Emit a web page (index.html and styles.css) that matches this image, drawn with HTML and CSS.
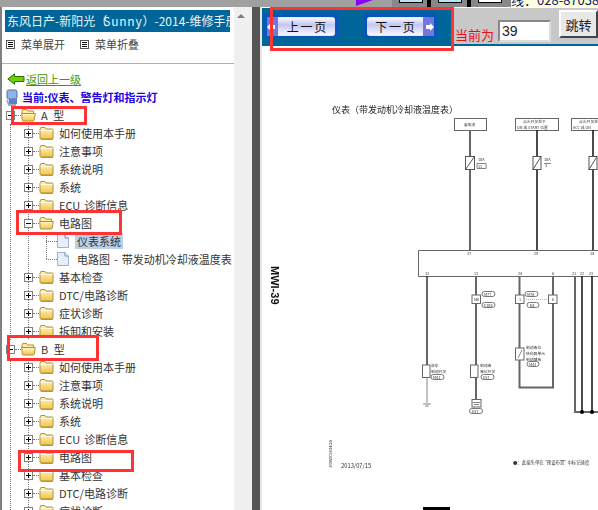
FILE: index.html
```html
<!DOCTYPE html>
<html lang="zh">
<head>
<meta charset="utf-8">
<title>维修手册</title>
<link rel="stylesheet" href="styles.css">
</head>
<body>
<svg class="defs" width="0" height="0">
  <defs>
    <linearGradient id="fg" x1="0" y1="0" x2="0" y2="1"><stop offset="0" stop-color="#fff6c4"/><stop offset="1" stop-color="#f2c44e"/></linearGradient>
    <symbol id="folder" viewBox="0 0 15 14">
      <path d="M1 3.5 L1.8 1.5 H6 L7 3 H13.2 Q14 3 14 4 V12 Q14 13 13 13 H2 Q1 13 1 12 Z" fill="url(#fg)" stroke="#b5902f"/>
      <path d="M1.5 4.5 H13.5" stroke="#fffbe0"/>
      <path d="M2 13.4 H14" stroke="#8a6a20" stroke-opacity=".6"/>
    </symbol>
    <symbol id="folder-open" viewBox="0 0 15 14">
      <path d="M1 3 L1.8 1.5 H5.5 L6.5 3 H12.5 V6 H1 Z" fill="#ffedaa" stroke="#b5902f"/>
      <path d="M.8 5.5 H14.3 L13.2 12.2 Q13 13 12 13 H2.2 Q1.2 13 1.2 12 Z" fill="url(#fg)" stroke="#b5902f"/>
    </symbol>
    <symbol id="doc" viewBox="0 0 12 14">
      <path d="M.5 .5 H8 L11.500 4 V13.500 H.5 Z" fill="#e6eefb" stroke="#9fb2d6"/>
      <path d="M8 .5 V4 H11.500" fill="#fff" stroke="#6f86b8"/>
    </symbol>
    <symbol id="menu-ico" viewBox="0 0 9 9">
      <rect x=".5" y=".5" width="8" height="8" fill="#fff" stroke="#555"/>
      <path d="M2 2.500 H7 M2 4.500 H7 M2 6.500 H7" stroke="#111"/>
    </symbol>
  </defs>
</svg>

<div class="topstrip">
  <div class="strip-gray"><span class="triangle"></span></div>
  <div class="strip-win"><span class="win-box cyan"></span></div>
  <div class="strip-black"></div>
  <div class="strip-win"><span class="win-box cyan"></span></div>
  <div class="strip-black"></div>
  <div class="strip-win"><span class="win-box white"></span></div>
  <div class="strip-hotline"><span class="hotline-text">线：028-87038</span></div>
</div>

<div class="workspace">
  <aside class="sidebar">
    <div class="side-content">
      <h1 class="manual-title">东风日产-新阳光<span class="paren">（</span><span class="sunny">Sunny</span>）-2014-维修手册</h1>
      <div class="menu-row">
        <a class="menu-item"><svg class="menu-svg"><use href="#menu-ico"/></svg>菜单展开</a>
        <a class="menu-item"><svg class="menu-svg"><use href="#menu-ico"/></svg>菜单折叠</a>
      </div>
      <hr class="divider">
      <div class="back-row">
        <svg class="back-arrow" viewBox="0 0 18 12"><path d="M.8 6 L7.500 .8 V3.500 H17 V8.500 H7.500 V11.200 Z" fill="#6fd000" stroke="#2f6f00"/></svg>
        <a class="back-link">返回上一级</a>
      </div>
      <div class="current-row">
        <svg class="pc-ico" viewBox="0 0 12 17">
          <rect x="1" y="1" width="10" height="9" rx="1.500" fill="#8fb4e8" stroke="#50709f"/>
          <rect x="3" y="10" width="8" height="5" fill="#5f80c8"/>
          <path d="M1 11 L3 16 H10" fill="none" stroke="#9aa8c0" stroke-width="2"/>
        </svg>
        <span class="current-text">当前:仪表、警告灯和指示灯</span>
      </div>

      <div class="row root-row"><span class="exp minus"></span><span class="dash"></span><svg class="fold"><use href="#folder-open"/></svg><span class="lbl root-lbl">A 型</span></div>
      <div class="kids">
        <div class="row"><span class="exp plus"></span><span class="dash"></span><svg class="fold"><use href="#folder"/></svg><span class="lbl">如何使用本手册</span></div>
        <div class="row"><span class="exp plus"></span><span class="dash"></span><svg class="fold"><use href="#folder"/></svg><span class="lbl">注意事项</span></div>
        <div class="row"><span class="exp plus"></span><span class="dash"></span><svg class="fold"><use href="#folder"/></svg><span class="lbl">系统说明</span></div>
        <div class="row"><span class="exp plus"></span><span class="dash"></span><svg class="fold"><use href="#folder"/></svg><span class="lbl">系统</span></div>
        <div class="row"><span class="exp plus"></span><span class="dash"></span><svg class="fold"><use href="#folder"/></svg><span class="lbl">ECU 诊断信息</span></div>
        <div class="row"><span class="exp minus"></span><span class="dash"></span><svg class="fold"><use href="#folder-open"/></svg><span class="lbl">电路图</span></div>
        <div class="leaves">
          <div class="row leaf"><span class="leaf-dash"></span><svg class="doc"><use href="#doc"/></svg><span class="lbl leaf-lbl selected">仪表系统</span></div>
          <div class="row leaf"><span class="leaf-dash"></span><svg class="doc"><use href="#doc"/></svg><span class="lbl leaf-lbl">电路图 - 带发动机冷却液温度表</span></div>
        </div>
        <div class="row"><span class="exp plus"></span><span class="dash"></span><svg class="fold"><use href="#folder"/></svg><span class="lbl">基本检查</span></div>
        <div class="row"><span class="exp plus"></span><span class="dash"></span><svg class="fold"><use href="#folder"/></svg><span class="lbl">DTC/电路诊断</span></div>
        <div class="row"><span class="exp plus"></span><span class="dash"></span><svg class="fold"><use href="#folder"/></svg><span class="lbl">症状诊断</span></div>
        <div class="row"><span class="exp plus"></span><span class="dash"></span><svg class="fold"><use href="#folder"/></svg><span class="lbl">拆卸和安装</span></div>
      </div>
      <div class="row root-row"><span class="exp minus"></span><span class="dash"></span><svg class="fold"><use href="#folder-open"/></svg><span class="lbl root-lbl">B 型</span></div>
      <div class="kids">
        <div class="row"><span class="exp plus"></span><span class="dash"></span><svg class="fold"><use href="#folder"/></svg><span class="lbl">如何使用本手册</span></div>
        <div class="row"><span class="exp plus"></span><span class="dash"></span><svg class="fold"><use href="#folder"/></svg><span class="lbl">注意事项</span></div>
        <div class="row"><span class="exp plus"></span><span class="dash"></span><svg class="fold"><use href="#folder"/></svg><span class="lbl">系统说明</span></div>
        <div class="row"><span class="exp plus"></span><span class="dash"></span><svg class="fold"><use href="#folder"/></svg><span class="lbl">系统</span></div>
        <div class="row"><span class="exp plus"></span><span class="dash"></span><svg class="fold"><use href="#folder"/></svg><span class="lbl">ECU 诊断信息</span></div>
        <div class="row"><span class="exp plus"></span><span class="dash"></span><svg class="fold"><use href="#folder"/></svg><span class="lbl">电路图</span></div>
        <div class="row"><span class="exp plus"></span><span class="dash"></span><svg class="fold"><use href="#folder"/></svg><span class="lbl">基本检查</span></div>
        <div class="row"><span class="exp plus"></span><span class="dash"></span><svg class="fold"><use href="#folder"/></svg><span class="lbl">DTC/电路诊断</span></div>
        <div class="row"><span class="exp plus"></span><span class="dash"></span><svg class="fold"><use href="#folder"/></svg><span class="lbl">症状诊断</span></div>
      </div>
    </div>
    <div class="scrollbar"><span class="scroll-up"></span></div>
  </aside>
  <div class="splitter"></div>

  <main class="main">
    <div class="toolbar">
      <div class="nav">
        <a class="page-btn prev"><span class="btn-cap cap-left"><svg class="cap-arrow" viewBox="0 0 8 8"><path d="M0 4 L4 0 V2 H8 V6 H4 V8 Z" fill="#fff"/></svg></span><span class="btn-txt">上 一 页</span></a>
        <a class="page-btn next"><span class="btn-txt">下 一 页</span><span class="btn-cap cap-right"><svg class="cap-arrow" viewBox="0 0 8 8"><path d="M8 4 L4 0 V2 H0 V6 H4 V8 Z" fill="#fff"/></svg></span></a>
      </div>
      <span class="cur-label">当前为</span>
      <input class="page-input" value="39">
      <button class="jump-btn">跳转</button>
    </div>
    <svg class="schematic" viewBox="262 46 336 464" width="336" height="464">
      <text class="s-title" x="332" y="112.500">仪表（带发动机冷却液温度表）</text>
      <text class="s-page" transform="translate(271 266) rotate(90)">MWI-39</text>
      <text class="s-tiny" transform="translate(332 468) rotate(-90)">JRNWC6634GB</text>
      <text class="s-date" x="341" y="468">2013/07/15</text>

      <g class="box-g">
        <rect x="454.500" y="118.500" width="32" height="12"/>
        <rect x="515.500" y="118.500" width="43" height="12"/>
        <rect x="571.500" y="118.500" width="40" height="12"/>
      </g>
      <text class="s-mini" x="464" y="126">蓄电池</text>
      <text class="s-mini" x="523" y="123">点火开关处于</text>
      <text class="s-mini" x="517" y="129">ON 或 START 位置</text>
      <text class="s-mini" x="579" y="123">点火开关处于</text>
      <text class="s-mini" x="573" y="129">ACC 或 ON</text>

      <path class="w-gray" d="M470 130 V250"/>
      <path class="w-black" d="M537 130 V250 M593 130 V250"/>
      <g class="fuse">
        <rect x="465.500" y="156.500" width="9" height="13"/><path d="M465.500 169.500 L474.500 156.500"/>
        <rect x="533" y="156.500" width="8" height="13"/><path d="M533 169.500 L541 156.500"/>
        <rect x="589" y="156.500" width="8" height="13"/><path d="M589 169.500 L597 156.500"/>
      </g>
      <text class="s-mini" x="478" y="161">10A</text>
      <text class="s-mini" x="478" y="168">11</text>
      <text class="s-mini" x="544" y="161">10A</text>
      <text class="s-mini" x="545" y="167">3</text>
      <path class="thin" d="M477 163.500 H486 V168.500 H477 Z M544 163.500 H551"/>

      <path class="frame" d="M598 250.500 H418.500 V276.500 H598"/>
      <text class="s-mini" x="467" y="255">37</text>
      <text class="s-mini" x="534" y="255">28</text>
      <text class="s-mini" x="590" y="255">14</text>
      <text class="s-mini" x="425" y="275">13</text>
      <text class="s-mini" x="474" y="275">11</text>
      <text class="s-mini" x="518" y="275">24</text>
      <text class="s-mini" x="552" y="275">6</text>
      <text class="s-mini" x="572" y="275">21</text>
      <text class="s-mini" x="580" y="275">22</text>
      <text class="s-mini" x="589" y="275">23</text>

      <path class="w-dark" d="M427 276 V370"/>
      <path class="w-thin" d="M427 370 V403"/>
      <path class="w-gray" d="M476 276 V399"/>
      <path class="w-gray" d="M519.500 276 V348 M519.500 360 V387.500 H553 V276"/>
      <path class="w-gray" d="M575 276 V412 H598"/>
      <path class="w-black" d="M582 276 V412 M592 276 V412"/>
      <circle cx="582" cy="412" r="2"/>
      <circle cx="592" cy="412" r="2"/>

      <g class="conn">
        <rect x="472" y="295" width="8.500" height="8.500"/>
        <rect x="515.500" y="295" width="8.500" height="8.500"/>
        <rect x="548.500" y="295" width="8.500" height="8.500"/>
        <rect x="515.500" y="348" width="8.500" height="12"/>
        <rect x="422.500" y="365" width="7.500" height="12.500"/>
        <rect x="470.500" y="365" width="7.500" height="12.500"/>
        <rect x="472" y="399.500" width="9" height="7.500"/>
      </g>
      <text class="s-mini" x="474" y="301">M6</text>
      <text class="s-mini" x="519" y="301">1</text>
      <text class="s-mini" x="552" y="301">6</text>
      <path class="dots" d="M524 299.500 H548"/>
      <path class="thin" d="M518 358 L522 350"/>
      <path class="thin" d="M473 402.500 H480 M474 404.500 H479 M423 404 H431 M425 406 H429"/>

      <g class="pill">
        <rect x="482" y="291.500" width="13" height="5" rx="2.500"/>
        <rect x="482" y="302.500" width="13" height="5" rx="2.500"/>
        <rect x="525" y="291.500" width="13" height="5" rx="2.500"/>
        <rect x="527" y="302.500" width="12" height="5" rx="2.500"/>
        <rect x="527" y="361.500" width="12" height="5" rx="2.500"/>
        <rect x="431" y="374.500" width="13" height="5" rx="2.500"/>
        <rect x="481" y="374.500" width="13" height="5" rx="2.500"/>
        <rect x="469.500" y="408.500" width="13" height="5" rx="2.500"/>
      </g>
      <text class="s-mini" x="484" y="296">M77</text>
      <text class="s-mini" x="484" y="307">E106</text>
      <text class="s-mini" x="527" y="296">M76</text>
      <text class="s-mini" x="530" y="307">B4</text>
      <text class="s-mini" x="529" y="366">M43</text>
      <text class="s-mini" x="433" y="379">M41</text>
      <text class="s-mini" x="483" y="379">E57</text>
      <text class="s-mini" x="472" y="413">E57</text>

      <text class="s-mini" x="526" y="349">制动液位</text>
      <text class="s-mini" x="526" y="355">转向器单元</text>
      <text class="s-mini" x="526" y="361">制动踏板</text>
      <text class="s-mini" x="431" y="367">驻车</text>
      <text class="s-mini" x="431" y="373">制动开关</text>
      <text class="s-mini" x="480" y="367">制动液</text>
      <text class="s-mini" x="480" y="373">液位开关</text>
      <text class="s-note" x="513" y="464">●：此接头单在 "预设布置" 中标记速度</text>
      <rect x="423" y="507" width="27" height="3"/>
    </svg>
  </main>
</div>

<div class="marks">
  <span class="mark mark-a"></span>
  <span class="mark mark-circuit"></span>
  <span class="mark mark-b"></span>
  <span class="mark mark-circuit2"></span>
  <span class="mark mark-nav"></span>
</div>
</body>
</html>
```

FILE: styles.css
```css
* { box-sizing: border-box; }
html, body { margin: 0; padding: 0; }
body {
  width: 598px;
  height: 510px;
  overflow: hidden;
  background: #fff;
  font-family: "Noto Sans CJK SC", "Liberation Sans", sans-serif;
  font-size: 11px;
  color: #333;
  position: relative;
}
.defs { position: absolute; }

/* top strip of the window behind */
.topstrip { display: flex; height: 7px; background: #a0a0a0; overflow: hidden; }
.strip-gray { width: 392px; display: flex; padding-left: 356px; }
.triangle {
  width: 0; height: 0;
  border-top: 6px solid #8a00f0;
  border-right: 17px solid transparent;
}
.strip-win { background: #888; height: 7px; padding: 0 4px 0 7px; }
.strip-win:nth-child(2) { width: 35px; }
.strip-win:nth-child(4) { width: 36px; }
.strip-win:nth-child(6) { width: 40px; }
.win-box { display: block; height: 3px; width: 24px; border: 1px solid #000; border-top: 0; }
.cyan { background: #bde3f5; }
.white { background: #fff; }
.strip-black { width: 4px; background: #000; }
.strip-hotline { flex: 1; background: #ffffe0; overflow: hidden; }
.hotline-text {
  display: block;
  margin-top: -8px;
  font: 13px/16px "Noto Sans CJK SC", sans-serif;
  color: #102060;
  white-space: nowrap;
}

.workspace { display: flex; height: 503px; }

/* left panel */
.sidebar {
  width: 248px;
  display: flex;
  border-left: 2px solid #808080;
  flex: none;
}
.side-content { width: 232px; overflow: hidden; }
.manual-title {
  margin: 3px 0 0 3px;
  width: 225px;
  height: 22px;
  background: #006699;
  color: #e8f4f8;
  font-size: 12px;
  font-weight: 400;
  line-height: 22px;
  padding-left: 2px;
  white-space: nowrap;
  overflow: hidden;
}
.paren { letter-spacing: -4px; }
.sunny { letter-spacing: .8px; }
.menu-row { display: flex; height: 24px; align-items: center; padding-left: 4px; }
.menu-item { display: flex; align-items: center; width: 74px; color: #444; }
.menu-svg { width: 9px; height: 9px; margin-right: 6px; }
.divider { margin: 7px 0 0; width: 232px; border: 0; border-top: 1px solid #b0b0b0; }
.back-row { display: flex; align-items: center; height: 18px; margin-top: 6px; padding-left: 5px; }
.back-arrow { width: 18px; height: 12px; margin-right: 1px; }
.back-link { color: #449900; text-decoration: underline; }
.current-row { display: flex; align-items: center; height: 18px; padding-left: 4px; }
.pc-ico { width: 12px; height: 17px; margin-right: 4px; }
.current-text { color: #2200dd; font-weight: 700; font-size: 11px; }

.row { display: flex; align-items: center; height: 18px; white-space: nowrap; }
.root-row { padding-left: 4px; }
.exp {
  width: 9px; height: 9px;
  flex: none;
  border: 1px solid #808080;
  background: #fff;
  position: relative;
}
.exp::before { content: ""; position: absolute; left: 1px; right: 1px; top: 3px; height: 1px; background: #000; }
.plus::after { content: ""; position: absolute; top: 1px; bottom: 1px; left: 3px; width: 1px; background: #000; }
.dash { width: 6px; height: 1px; flex: none; border-top: 1px dotted #777; }
.fold { width: 15px; height: 14px; flex: none; margin-right: 5px; }
.lbl { color: #333; line-height: 15px; padding-top: 1px; word-spacing: 1.500px; }
.root-lbl { word-spacing: 3px; }

.kids {
  margin-left: 8px;
  padding-left: 13px;
  border-left: 1px dotted #777;
  background: repeating-linear-gradient(#777 0 1px, transparent 1px 2px) 17px 0 / 1px 100% no-repeat;
}
.leaves {
  margin-left: 11px;
  background: repeating-linear-gradient(#777 0 1px, transparent 1px 2px) 11px 0 / 1px calc(100% - 9px) no-repeat;
}
.leaf { padding-left: 11px; }
.leaf-dash { width: 11px; height: 1px; flex: none; border-top: 1px dotted #777; }
.doc { width: 12px; height: 14px; flex: none; margin-right: 6px; }
.leaf-lbl { padding: 1px 2px 0; }
.selected { background: #bcd0ea; }

.scrollbar { width: 14px; background: #f0f0f0; padding-top: 7px; display: flex; justify-content: center; align-items: flex-start; }
.scroll-up { width: 0; height: 0; border: 4px solid transparent; border-top: 0; border-bottom: 4px solid #7c7c7c; }

.splitter {
  width: 14px;
  flex: none;
  background: #555;
  border-left: 4px solid #f0f0f0;
  border-right: 2px solid #e8e8e8;
}

/* right panel */
.main { flex: 1; min-width: 0; }
.toolbar {
  display: flex;
  align-items: flex-start;
  height: 39px;
  background: #c8c8c8;
  border-top: 1px solid #fff;
  border-bottom: 2px solid #006699;
}
.nav {
  width: 191px;
  height: 38px;
  flex: none;
  background: #006699;
  padding: 5px 0 0 1px;
  display: flex;
  gap: 25px;
  align-items: flex-start;
}
.page-btn {
  display: flex;
  align-items: stretch;
  height: 25px;
  background: #0a55b8;
  color: #111;
  font-size: 12px;
  word-spacing: -1px;
}
.prev { width: 76px; padding: 4px 4px 2px; }
.next { width: 73px; padding: 4px 3px 2px; }
.btn-txt {
  flex: 1;
  text-align: center;
  line-height: 18px;
  background: linear-gradient(#f8f8ff 0, #c4c6f2 40%, #f6f6ff 100%);
  border: 1px solid #e8e8ff;
  border-width: 1px 0;
}
.cap-left + .btn-txt { border-radius: 0 3px 3px 0; }
.next .btn-txt { border-radius: 3px 0 0 3px; }
.btn-cap { width: 11px; display: flex; align-items: center; background: #7078e0; overflow: hidden; }
.cap-left { justify-content: flex-start; }
.cap-right { justify-content: flex-end; }
.cap-arrow { width: 8px; height: 8px; flex: none; }
.cur-label { margin: 17px 0 0 2px; color: #e81010; font-size: 13px; line-height: 19px; width: 43px; }
.page-input {
  width: 53px; height: 22px;
  margin-top: 12px;
  padding: 0 2px;
  border: 2px solid;
  border-color: #888 #ddd #ddd #888;
  background: #fff;
  font: 14px "Liberation Sans", sans-serif;
  color: #222;
}
.jump-btn {
  width: 39px; height: 28px;
  margin: 2px 0 0 8px;
  padding: 0;
  border: 2px solid;
  border-color: #fff #444 #444 #fff;
  background: #e8e8e8;
  font: 13px "Noto Sans CJK SC", sans-serif;
  color: #222;
}

/* wiring diagram */
.schematic { display: block; filter: blur(.35px); }
.schematic text { font-family: "Noto Sans CJK SC", "Liberation Sans", sans-serif; fill: #333; }
.schematic .s-title { font-size: 9px; fill: #222; }
.schematic .s-page { font: 700 11px "Liberation Sans", sans-serif; fill: #111; }
.s-tiny { font-size: 4px; }
.s-date { font-size: 5.800px; }
.s-mini { font-size: 3.800px; }
.s-note { font-size: 4.400px; }
.box-g rect, .frame, .conn rect { fill: none; stroke: #666; stroke-width: 1; }
.box-g rect { fill: #fff; }
.fuse rect, .fuse path { fill: #fff; stroke: #555; stroke-width: 1; }
.conn rect { fill: #fff; }
.w-gray { fill: none; stroke: #666; stroke-width: 2; }
.w-black { fill: none; stroke: #111; stroke-width: 1.500; }
.w-dark { fill: none; stroke: #333; stroke-width: 1.500; }
.w-thin, .thin { fill: none; stroke: #666; stroke-width: .8; }
.dots { fill: none; stroke: #999; stroke-width: .8; stroke-dasharray: 1 1; }
.pill rect { fill: #fff; stroke: #555; stroke-width: .8; }

/* red annotation rectangles drawn over the screenshot */
.mark { position: absolute; border: 3px solid #ff3333; pointer-events: none; }
.mark-a { left: 11px; top: 106px; width: 76px; height: 19px; }
.mark-circuit { left: 16px; top: 210px; width: 106px; height: 25px; }
.mark-b { left: 7px; top: 335px; width: 92px; height: 26px; }
.mark-circuit2 { left: 18px; top: 450px; width: 116px; height: 22px; }
.mark-nav { left: 270px; top: 7px; width: 184px; height: 44px; }
```
